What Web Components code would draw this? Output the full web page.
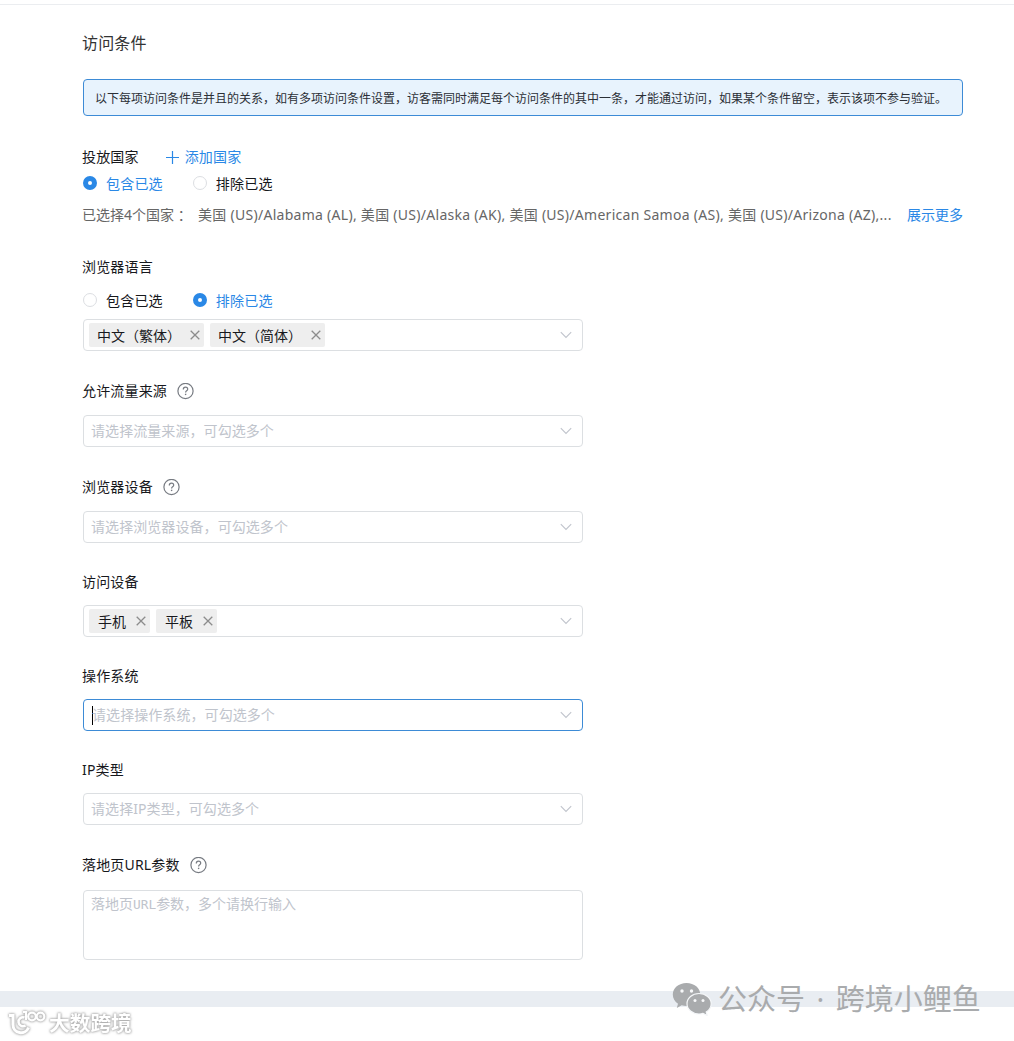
<!DOCTYPE html>
<html lang="zh-CN">
<head>
<meta charset="UTF-8">
<title>访问条件</title>
<style>
  :root {
    --color-primario: #2a88e6;
    --color-borde: #dcdfe2;
    --color-texto: #17181c;
    --color-suave: #c0c4cc;
  }
  body {
    margin: 0;
    background: #fff;
    color: var(--color-texto);
    font-family: "Noto Sans", "Noto Sans CJK SC", sans-serif;
    font-size: 14px;
    line-height: 20px;
  }
</style>
</head>
<body>
<access-page>
  <info-notice>以下每项访问条件是并且的关系，如有多项访问条件设置，访客需同时满足每个访问条件的其中一条，才能通过访问，如果某个条件留空，表示该项不参与验证。</info-notice>

  <form-field label="投放国家" style="margin-top:31px; --gap:9px">
    <add-link slot="extra">添加国家</add-link>
    <radio-pair active="0"></radio-pair>
    <country-summary></country-summary>
  </form-field>

  <form-field label="浏览器语言" style="margin-top:32px; --gap:16px">
    <radio-pair active="1"></radio-pair>
    <multi-select tags="中文（繁体）,中文（简体）" style="margin-top:12px; --tag-gap:9px"></multi-select>
  </form-field>

  <form-field label="允许流量来源" help style="margin-top:30px">
    <multi-select placeholder="请选择流量来源，可勾选多个"></multi-select>
  </form-field>

  <form-field label="浏览器设备" help style="margin-top:30px">
    <multi-select placeholder="请选择浏览器设备，可勾选多个"></multi-select>
  </form-field>

  <form-field label="访问设备" style="margin-top:29px; --gap:13px">
    <multi-select tags="手机,平板" style="--tag-pad:9px"></multi-select>
  </form-field>

  <form-field label="操作系统" style="margin-top:29px; --gap:13px">
    <multi-select placeholder="请选择操作系统，可勾选多个" focused></multi-select>
  </form-field>

  <form-field label="IP类型" style="margin-top:29px; --gap:13px">
    <multi-select placeholder="请选择IP类型，可勾选多个"></multi-select>
  </form-field>

  <form-field label="落地页URL参数" help style="margin-top:30px; --gap:15px">
    <text-box placeholder="落地页URL参数，多个请换行输入"></text-box>
  </form-field>
</access-page>
<account-mark></account-mark>
<site-mark></site-mark>

<script>
  class AccessPage extends HTMLElement {
    constructor() {
      super();
      this.attachShadow({ mode: "open" }).innerHTML = `
        <style>
          :host { display: block; }
          .top { height: 4px; border-bottom: 1px solid #ebedf0; }
          main { padding: 26px 0 31px 83px; width: 880px; }
          h1 { margin: 0 0 24px -1px; font-size: 16px; line-height: 24px; font-weight: 400; letter-spacing: .15px; color: #333; }
          .band { height: 16px; background: #e9edf2; }
        </style>
        <div class="top"></div>
        <main><h1>访问条件</h1><slot></slot></main>
        <div class="band"></div>
      `;
    }
  }

  class InfoNotice extends HTMLElement {
    constructor() {
      super();
      this.attachShadow({ mode: "open" }).innerHTML = `
        <style>
          :host {
            display: block;
            box-sizing: border-box;
            height: 37px;
            padding: 0 11px;
            border: 1px solid #3d8bd6;
            border-radius: 4px;
            background: #e8f3fd;
            font-size: 12px;
            line-height: 38px;
            white-space: nowrap;
            color: #2b2f36;
          }
        </style>
        <slot></slot>
      `;
    }
  }

  class FormField extends HTMLElement {
    connectedCallback() {
      const ayuda = this.hasAttribute("help") ? "<help-icon></help-icon>" : "";
      this.attachShadow({ mode: "open" }).innerHTML = `
        <style>
          :host { display: block; }
          .label {
            display: flex;
            align-items: center;
            height: 20px;
            margin: 0 0 var(--gap, 14px) -1px;
            letter-spacing: .17px;
          }
          help-icon { margin-left: 10px; }
        </style>
        <div class="label"><span>${this.getAttribute("label")}</span>${ayuda}<slot name="extra"></slot></div>
        <slot></slot>
      `;
    }
  }

  class HelpIcon extends HTMLElement {
    constructor() {
      super();
      this.attachShadow({ mode: "open" }).innerHTML = `
        <style>
          :host { display: block; width: 17px; height: 17px; }
          svg { display: block; }
        </style>
        <svg width="17" height="17" viewBox="0 0 17 17" fill="none" stroke="#777b82" stroke-width="1.2">
          <circle cx="8.5" cy="8" r="7.6"/>
          <path d="M6.3 6.400c0-1.400 1-2.200 2.200-2.200s2.200.8 2.200 2c0 1.500-2.100 1.700-2.100 3.200"/>
          <path d="M8.600 10.700v1.400" stroke-width="1.400"/>
        </svg>
      `;
    }
  }

  class AddLink extends HTMLElement {
    constructor() {
      super();
      this.attachShadow({ mode: "open" }).innerHTML = `
        <style>
          :host { display: flex; align-items: center; gap: 6px; margin-left: 27px; color: var(--color-primario); }
        </style>
        <svg width="13" height="13" viewBox="0 0 13 13" stroke="currentColor" stroke-width="1.200"><path d="M6.500 0v13M0 6.500h13"/></svg>
        <slot></slot>
      `;
    }
  }

  class RadioPair extends HTMLElement {
    connectedCallback() {
      const activo = Number(this.getAttribute("active"));
      this.attachShadow({ mode: "open" }).innerHTML = `
        <style>
          :host { display: flex; gap: 30px; height: 14px; letter-spacing: .2px; }
          .opcion { display: flex; align-items: center; gap: 9px; }
          .punto {
            box-sizing: border-box;
            width: 14px;
            height: 14px;
            border: 1px solid #dcdee2;
            border-radius: 50%;
            background: #fff;
          }
          .texto { padding-top: 2px; }
          .activa { color: var(--color-primario); }
          .activa .punto { border: 5px solid var(--color-primario); }
        </style>
        ${["包含已选", "排除已选"].map((t, i) => `
          <div class="opcion ${i === activo ? "activa" : ""}"><span class="punto"></span><span class="texto">${t}</span></div>
        `).join("")}
      `;
    }
  }

  class CountrySummary extends HTMLElement {
    constructor() {
      super();
      this.attachShadow({ mode: "open" }).innerHTML = `
        <style>
          :host { display: flex; margin: 15px 0 0 -1px; color: #666; white-space: nowrap; }
          .total { width: 116px; }
          .lista { flex: 1; letter-spacing: .28px; }
          .mas { color: var(--color-primario); }
        </style>
        <span class="total">已选择4个国家 ：</span>
        <span class="lista">美国 (US)/Alabama (AL), 美国 (US)/Alaska (AK), 美国 (US)/American Samoa (AS), 美国 (US)/Arizona (AZ),...</span>
        <span class="mas">展示更多</span>
      `;
    }
  }

  class MultiSelect extends HTMLElement {
    connectedCallback() {
      const tags = (this.getAttribute("tags") || "").split(",").filter(Boolean);
      const contenido = tags.length
        ? tags.map(t => `
            <span class="tag"><span>${t}</span><svg width="10" height="10" viewBox="0 0 10 10" stroke="#8c8c8c" stroke-width="1.300"><path d="M.7.7l8.600 8.600M9.300.7L.7 9.300"/></svg></span>
          `).join("")
        : `<span class="placeholder">${this.getAttribute("placeholder")}</span>`;
      this.attachShadow({ mode: "open" }).innerHTML = `
        <style>
          :host {
            display: flex;
            align-items: center;
            gap: 6px;
            box-sizing: border-box;
            width: 500px;
            height: 32px;
            padding: 0 10px 0 5px;
            border: 1px solid var(--color-borde);
            border-radius: 4px;
          }
          :host([focused]) { border-color: #3d8bd6; }
          .tag {
            display: flex;
            align-items: center;
            gap: var(--tag-gap, 10px);
            box-sizing: border-box;
            height: 24px;
            padding: 0 4px 0 var(--tag-pad, 8px);
            border-radius: 2px;
            background: #eeeeee;
          }
          .tag span { padding-top: 2px; }
          .placeholder { margin-left: 2px; letter-spacing: .07px; color: var(--color-suave); }
          /* cursor de texto */
          :host([focused]) .placeholder::before {
            content: "";
            display: inline-block;
            width: 1px;
            height: 19px;
            margin: 0 -1px 0 1px;
            vertical-align: middle;
            background: #000;
          }
          .flecha { margin-left: auto; }
        </style>
        ${contenido}
        <svg class="flecha" width="12" height="8" viewBox="0 0 12 8" fill="none" stroke="#c0c4cc" stroke-width="1.100"><path d="M.8 1.200L6 6.400l5.200-5.200"/></svg>
      `;
    }
  }

  class TextBox extends HTMLElement {
    connectedCallback() {
      const texto = this.getAttribute("placeholder").replace("URL", "<b>URL</b>");
      this.attachShadow({ mode: "open" }).innerHTML = `
        <style>
          :host {
            display: block;
            box-sizing: border-box;
            width: 500px;
            height: 70px;
            padding: 3px 7px;
            border: 1px solid var(--color-borde);
            border-radius: 4px;
            color: var(--color-suave);
          }
          b { font: 400 12.8px "DejaVu Sans Mono", monospace; }
        </style>
        <span>${texto}</span>
      `;
    }
  }

  // Marcas superpuestas al pie de la página
  class AccountMark extends HTMLElement {
    constructor() {
      super();
      this.attachShadow({ mode: "open" }).innerHTML = `
        <style>
          :host {
            position: absolute;
            left: 672px;
            top: 979px;
            display: flex;
            align-items: center;
            gap: 6px;
            color: #a9abad;
            font-size: 29px;
            line-height: 40px;
            word-spacing: 4px;
            white-space: nowrap;
          }
        </style>
        <svg width="40" height="34" viewBox="0 0 40 34">
          <path fill="#a9abad" d="M14.500 1C6.800 1 .8 6 .8 12.600c0 3.900 2 7 5.200 9.200L4.800 26l4.900-2.700c1.600.5 3.100.7 4.800.7 7.700 0 13.800-5 13.800-11.500S22.200 1 14.500 1z"/>
          <path fill="#a9abad" stroke="#f5f7f9" stroke-width="1.200" d="M27 11.500c-6.700 0-12 4.500-12 10.200S20.300 32 27 32c1.400 0 2.800-.2 4-.6l4.300 2.200-1.100-3.600c3.100-1.900 5-4.900 5-8.300 0-5.700-5.500-10.200-12.200-10.200z"/>
          <g fill="#f7f8f9"><circle cx="10" cy="9" r="1.700"/><circle cx="19.500" cy="9" r="1.700"/><circle cx="23" cy="18.500" r="1.500"/><circle cx="31" cy="18.500" r="1.500"/></g>
        </svg>
        <span>公众号 · 跨境小鲤鱼</span>
      `;
    }
  }

  class SiteMark extends HTMLElement {
    constructor() {
      super();
      this.attachShadow({ mode: "open" }).innerHTML = `
        <style>
          :host {
            position: absolute;
            left: 7px;
            top: 1005px;
            display: flex;
            align-items: center;
            gap: 2px;
            color: #fff;
            font-size: 20.700px;
            font-weight: 700;
            line-height: 30px;
            white-space: nowrap;
            filter: drop-shadow(0 0 1px #aaa) drop-shadow(0 0 1px #bbb);
          }
          span { padding-top: 3px; }
        </style>
        <svg width="40" height="28" viewBox="0 0 40 28" fill="none" stroke="#fff" stroke-width="3">
          <path d="M2 7.500h4V16.500a8 8 0 0 0 15.500 3"/>
          <path d="M17.500 9.500a4.500 4.500 0 1 0 1 8" stroke-width="2.500"/>
          <path d="M16 4h3V12" stroke-width="2.200"/>
          <circle cx="25" cy="8.500" r="3.800" stroke-width="2.200"/>
          <circle cx="33.500" cy="8.500" r="3.800" stroke-width="2.200"/>
        </svg>
        <span>大数跨境</span>
      `;
    }
  }

  customElements.define("access-page", AccessPage);
  customElements.define("info-notice", InfoNotice);
  customElements.define("form-field", FormField);
  customElements.define("help-icon", HelpIcon);
  customElements.define("add-link", AddLink);
  customElements.define("radio-pair", RadioPair);
  customElements.define("country-summary", CountrySummary);
  customElements.define("multi-select", MultiSelect);
  customElements.define("text-box", TextBox);
  customElements.define("account-mark", AccountMark);
  customElements.define("site-mark", SiteMark);
</script>
</body>
</html>
